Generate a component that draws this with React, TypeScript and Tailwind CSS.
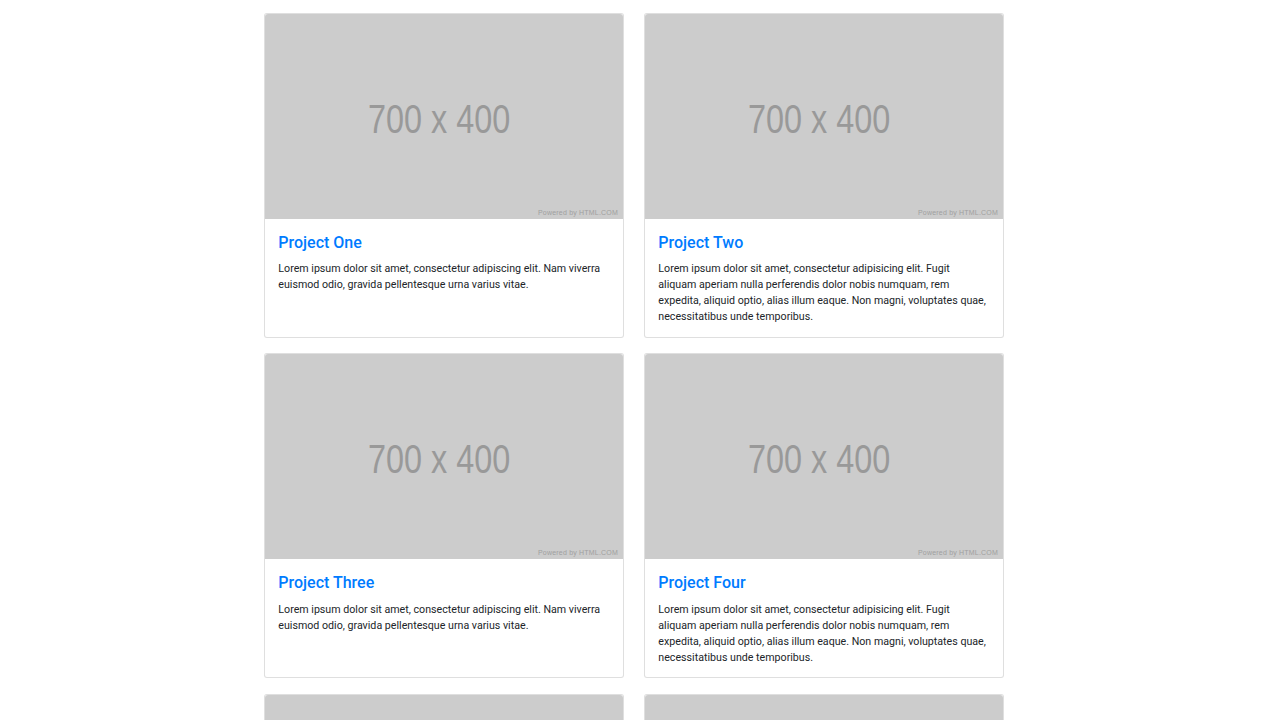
const projects = [
  {
    title: "Project One",
    text: "Lorem ipsum dolor sit amet, consectetur adipiscing elit. Nam viverra euismod odio, gravida pellentesque urna varius vitae.",
  },
  {
    title: "Project Two",
    text: "Lorem ipsum dolor sit amet, consectetur adipisicing elit. Fugit aliquam aperiam nulla perferendis dolor nobis numquam, rem expedita, aliquid optio, alias illum eaque. Non magni, voluptates quae, necessitatibus unde temporibus.",
  },
  {
    title: "Project Three",
    text: "Lorem ipsum dolor sit amet, consectetur adipiscing elit. Nam viverra euismod odio, gravida pellentesque urna varius vitae.",
  },
  {
    title: "Project Four",
    text: "Lorem ipsum dolor sit amet, consectetur adipisicing elit. Fugit aliquam aperiam nulla perferendis dolor nobis numquam, rem expedita, aliquid optio, alias illum eaque. Non magni, voluptates quae, necessitatibus unde temporibus.",
  },
  {
    title: "Project Five",
    text: "Lorem ipsum dolor sit amet, consectetur adipiscing elit. Nam viverra euismod odio, gravida pellentesque urna varius vitae.",
  },
  {
    title: "Project Six",
    text: "Lorem ipsum dolor sit amet, consectetur adipisicing elit. Fugit aliquam aperiam nulla perferendis dolor nobis numquam, rem expedita, aliquid optio.",
  },
];

const Placeholder = () => (
  <div className="relative h-[204.6px] bg-[#cccccc] rounded-t-[3px] flex items-center justify-center overflow-hidden">
    <span className="font-['Liberation_Sans',Arial,sans-serif] text-[41px] leading-none text-[#999999] scale-x-[0.79] -translate-x-[5px] translate-y-[3px] whitespace-nowrap">
      700 x 400
    </span>
    <span className="absolute right-[5px] bottom-[3px] font-['Liberation_Sans',Arial,sans-serif] text-[7px] tracking-[0.2px] leading-none text-[#a0a0a0] whitespace-nowrap">
      Powered by HTML.COM
    </span>
  </div>
);

const ProjectCard = ({ title, text }: { title: string; text: string }) => (
  <div className="flex flex-col h-full bg-white border border-[rgba(0,0,0,0.125)] rounded-[3px]">
    <Placeholder />
    <div className="flex-1 pt-[14.5px] px-[13.33px] pb-[11.5px]">
      <h4 className="text-[16px] leading-[19.2px] font-medium text-[#007bff] mb-[9px]">{title}</h4>
      <p className="text-[10.67px] leading-[16px] text-[#212529]">{text}</p>
    </div>
  </div>
);

export default function App() {
  return (
    <div className="min-h-screen bg-white font-['Roboto',sans-serif] pt-[13px] pl-[264px]">
      <div className="w-[740px] grid grid-cols-2 gap-x-5 gap-y-[15.5px]">
        {projects.map((p) => (
          <ProjectCard key={p.title} title={p.title} text={p.text} />
        ))}
      </div>
    </div>
  );
}
